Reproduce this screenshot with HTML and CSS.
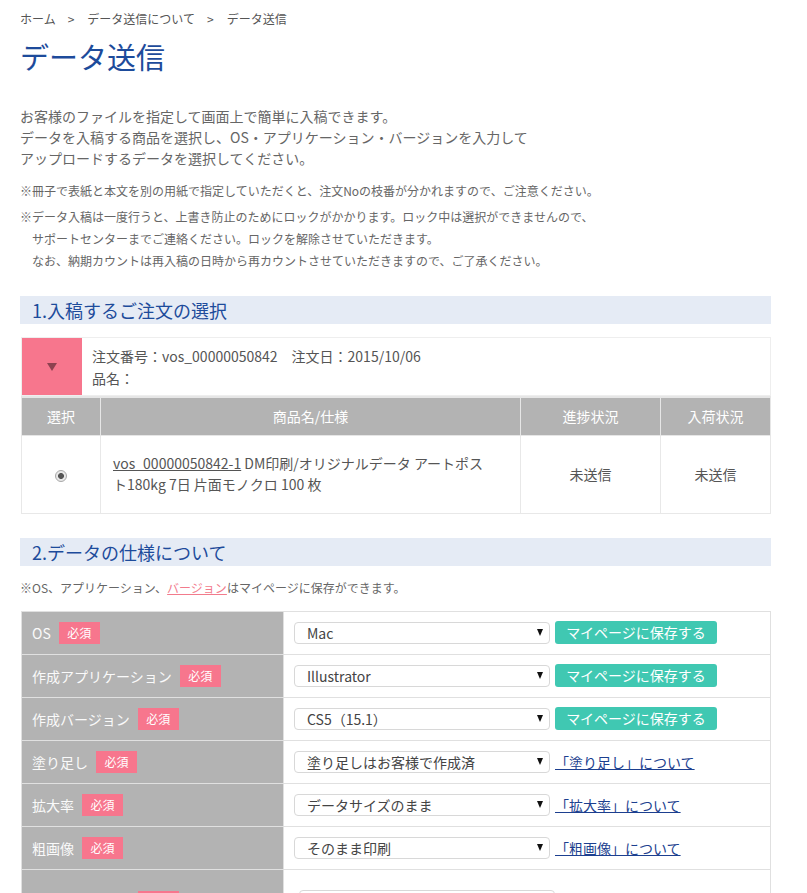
FILE: index.html
```html
<!DOCTYPE html>
<html lang="ja">
<head>
<meta charset="utf-8">
<title>データ送信</title>
<link rel="stylesheet" href="styles.css">
</head>
<body>
<div class="page">
  <nav class="crumbs">
    <a href="#">ホーム</a><span class="sep">&gt;</span><a href="#">データ送信について</a><span class="sep">&gt;</span><span>データ送信</span>
  </nav>
  <h1 class="title">データ送信</h1>

  <p class="intro">お客様のファイルを指定して画面上で簡単に入稿できます。<br>データを入稿する商品を選択し、OS・アプリケーション・バージョンを入力して<br>アップロードするデータを選択してください。</p>

  <p class="note">※冊子で表紙と本文を別の用紙で指定していただくと、注文Noの枝番が分かれますので、ご注意ください。</p>
  <p class="note note-hang">※データ入稿は一度行うと、上書き防止のためにロックがかかります。ロック中は選択ができませんので、<br>サポートセンターまでご連絡ください。ロックを解除させていただきます。<br>なお、納期カウントは再入稿の日時から再カウントさせていただきますので、ご了承ください。</p>

  <h2 class="sec-head sec1">1.入稿するご注文の選択</h2>

  <div class="order">
    <div class="order-toggle"><span class="tri"></span></div>
    <div class="order-info">
      <div>注文番号：vos_00000050842　注文日：2015/10/06</div>
      <div>品名：</div>
    </div>
  </div>

  <table class="items">
    <thead>
      <tr>
        <th class="c-sel">選択</th>
        <th class="c-name">商品名/仕様</th>
        <th class="c-prog">進捗状況</th>
        <th class="c-arr">入荷状況</th>
      </tr>
    </thead>
    <tbody>
      <tr>
        <td class="c-sel"><span class="radio"></span></td>
        <td class="c-name left"><a href="#" class="item-link">vos_00000050842-1</a> DM印刷/オリジナルデータ アートポスト180kg 7日 片面モノクロ 100 枚</td>
        <td class="c-prog">未送信</td>
        <td class="c-arr">未送信</td>
      </tr>
    </tbody>
  </table>

  <h2 class="sec-head sec2">2.データの仕様について</h2>
  <p class="note spec-note">※OS、アプリケーション、<a href="#" class="pink-link">バージョン</a>はマイページに保存ができます。</p>

  <table class="spec">
    <tr>
      <th><span class="lbl">OS</span><span class="req">必須</span></th>
      <td><div class="field"><div class="select"><span>Mac</span><span class="arr"></span></div><button class="save">マイページに保存する</button></div></td>
    </tr>
    <tr>
      <th><span class="lbl">作成アプリケーション</span><span class="req">必須</span></th>
      <td><div class="field"><div class="select"><span>Illustrator</span><span class="arr"></span></div><button class="save">マイページに保存する</button></div></td>
    </tr>
    <tr>
      <th><span class="lbl">作成バージョン</span><span class="req">必須</span></th>
      <td><div class="field"><div class="select"><span>CS5（15.1）</span><span class="arr"></span></div><button class="save">マイページに保存する</button></div></td>
    </tr>
    <tr>
      <th><span class="lbl">塗り足し</span><span class="req">必須</span></th>
      <td><div class="field"><div class="select"><span>塗り足しはお客様で作成済</span><span class="arr"></span></div><a href="#" class="info-link">「塗り足し」について</a></div></td>
    </tr>
    <tr>
      <th><span class="lbl">拡大率</span><span class="req">必須</span></th>
      <td><div class="field"><div class="select"><span>データサイズのまま</span><span class="arr"></span></div><a href="#" class="info-link">「拡大率」について</a></div></td>
    </tr>
    <tr>
      <th><span class="lbl">粗画像</span><span class="req">必須</span></th>
      <td><div class="field"><div class="select"><span>そのまま印刷</span><span class="arr"></span></div><a href="#" class="info-link">「粗画像」について</a></div></td>
    </tr>
    <tr class="tall">
      <th><span class="lbl">入稿データ形式</span><span class="req">必須</span></th>
      <td><div class="field"><div class="select wide"><span>PDF</span><span class="arr"></span></div></div></td>
    </tr>
  </table>
</div>
</body>
</html>
```

FILE: styles.css
```css
* { box-sizing: border-box; }
html, body { margin: 0; padding: 0; background: #fff; }
body {
  font-family: "Noto Sans CJK JP", "Noto Sans", sans-serif;
  color: #555;
  font-size: 14px;
}
.page {
  width: 771px;
  padding: 10px 0 40px 20px;
}
.crumbs {
  font-size: 12px;
  line-height: 18px;
  color: #555;
}
.crumbs a { color: #555; text-decoration: none; }
.crumbs .sep { margin: 0 13px 0 12px; }
.title {
  margin: 8px 0 0;
  font-size: 29px;
  line-height: 40px;
  font-weight: normal;
  color: #1d4b9b;
}
.intro {
  margin: 30px 0 0;
  font-size: 14px;
  line-height: 21px;
  color: #666;
}
.note {
  margin: 11px 0 0;
  font-size: 12px;
  line-height: 22px;
  color: #666;
}
.note + .note { margin-top: 4px; }
.note-hang { padding-left: 12px; text-indent: -12px; }
.sec-head {
  margin: 0;
  height: 28px;
  line-height: 28px;
  font-size: 18px;
  font-weight: normal;
  color: #1d4b9b;
  background: #e5ebf5;
  padding-left: 12px;
}
.sec1 { margin-top: 24px; }
.sec2 { margin-top: 24px; }

.order {
  margin: 13px 0 0 1px;
  display: flex;
  border: 1px solid #eee;
  height: 59px;
}
.order-toggle {
  width: 60px;
  background: #f7768d;
  display: flex;
  align-items: center;
  justify-content: center;
}
.tri {
  width: 0; height: 0;
  border-left: 5px solid transparent;
  border-right: 5px solid transparent;
  border-top: 8px solid #8e4250;
}
.order-info {
  padding-left: 10px;
  display: flex;
  flex-direction: column;
  justify-content: center;
  line-height: 22px;
  color: #555;
}

.items {
  margin-left: 1px;
  width: 750px;
  border-collapse: collapse;
  border: 1px solid #e8e8e8;
}
.items th {
  background: #b3b3b3;
  color: #fff;
  font-weight: normal;
  height: 38px;
  border: 1px solid #e6e6e6;
  border-top: 2px solid #e6e6e6;
}
.items td {
  height: 78px;
  border: 1px solid #e8e8e8;
  text-align: center;
  line-height: 21px;
  color: #555;
}
.items td.left { text-align: left; padding: 0 27px 0 12px; }
.c-sel { width: 79px; }
.c-name { width: 420px; }
.c-prog { width: 140px; }
.item-link { color: #555; text-decoration: underline; }
.radio {
  display: inline-block;
  width: 12px; height: 12px;
  border-radius: 50%;
  border: 1px solid #a9a9a9;
  background: radial-gradient(circle, #555 0 2.6px, #e8e8e8 3.3px);
  vertical-align: middle;
}

.spec-note { margin-top: 11px; }
.pink-link { color: #f27b8c; text-decoration: underline; }

.spec {
  margin: 12px 0 0 1px;
  width: 750px;
  border-collapse: collapse;
  border: 1px solid #e0e0e0;
}
.spec th {
  width: 262px;
  height: 43px;
  background: #b3b3b3;
  color: #fafafa;
  font-weight: normal;
  text-align: left;
  padding: 0 0 0 10px;
  border: 1px solid #e0e0e0;
  white-space: nowrap;
}
.spec td {
  height: 43px;
  border: 1px solid #e0e0e0;
  padding: 0 0 0 10px;
}
.spec .tall th, .spec .tall td { height: 64px; }
.lbl { vertical-align: middle; }
.req {
  display: inline-block;
  margin-left: 8px;
  width: 41px;
  height: 22px;
  line-height: 22px;
  text-align: center;
  background: #f7768d;
  color: #fff;
  font-size: 12px;
  vertical-align: middle;
}
.field {
  display: flex;
  align-items: center;
  gap: 5px;
}
.select {
  width: 256px;
  height: 22px;
  border: 1px solid #d8d8d8;
  border-radius: 4px;
  display: flex;
  align-items: center;
  justify-content: space-between;
  padding: 0 6px 0 12px;
  color: #444;
  font-size: 14px;
  line-height: 20px;
}
.select.wide { margin-left: 5px; }
.arr {
  width: 0; height: 0;
  border-left: 3px solid transparent;
  border-right: 3px solid transparent;
  border-top: 7px solid #111;
}
.save {
  width: 162px;
  height: 23px;
  border: none;
  border-radius: 3px;
  background: #40c8b2;
  color: #fff;
  font-family: inherit;
  font-size: 14px;
  line-height: 23px;
  padding: 0;
}
.info-link { color: #1c3f8f; text-decoration: underline; font-size: 14px; }
```
